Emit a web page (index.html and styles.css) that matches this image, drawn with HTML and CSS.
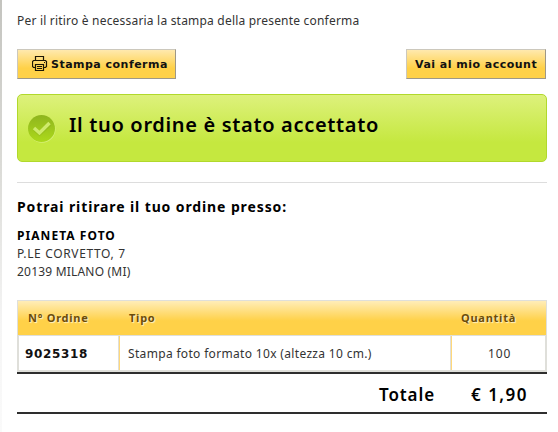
FILE: index.html
```html
<!DOCTYPE html>
<html lang="it">
<head>
<meta charset="utf-8">
<title>Conferma ordine</title>
<link rel="stylesheet" href="styles.css">
</head>
<body>
<div class="page">
  <div class="edge"></div>
  <main class="content">
    <p class="intro">Per il ritiro è necessaria la stampa della presente conferma</p>
    <div class="actions">
      <a class="btn btn-print"><svg class="printer" viewBox="0 0 16 16" width="16" height="16" fill="none" stroke="#1d1706" stroke-width="1.200"><path d="M3.500 4.500v-4h8v4M3.500 11.500h-2l-1-1v-5l1-1h12l1 1v5l-1 1h-2M3.500 8.500h8v6h-8zM5 10.500h5M5 12.500h5M12 6.500h1"/></svg><span>Stampa conferma</span></a>
      <a class="btn btn-account"><span>Vai al mio account</span></a>
    </div>
    <section class="accepted">
      <svg class="check" width="28" height="28" viewBox="0 0 28 28">
        <defs><linearGradient id="disc" x1="0" y1="0" x2="0" y2="1"><stop offset="0" stop-color="#8fb51e"/><stop offset="1" stop-color="#acd91b"/></linearGradient></defs>
        <circle cx="14" cy="14.300" r="13.500" fill="#d7f078"/>
        <circle cx="13.500" cy="13.500" r="13.500" fill="url(#disc)"/>
        <path d="M6.500 14.500l5 4.500L22 9.500" fill="none" stroke="#86ad19" stroke-width="3.500" opacity=".4"/>
        <path d="M6 13l5.500 5L21.500 8" fill="none" stroke="#cfea6c" stroke-width="3.400"/>
      </svg>
      <h1>Il tuo ordine è stato accettato</h1>
    </section>
    <section class="pickup">
      <h2>Potrai ritirare il tuo ordine presso:</h2>
      <address>
        <strong>PIANETA FOTO</strong>
        <span class="street">P.LE CORVETTO, 7</span>
        <span class="city">20139 MILANO (MI)</span>
      </address>
    </section>
    <div class="order">
      <div class="row head"><span>N° Ordine</span><span>Tipo</span><span>Quantità</span></div>
      <div class="row line"><span class="number">9025318</span><span class="type">Stampa foto formato 10x (altezza 10 cm.)</span><span class="qty">100</span></div>
    </div>
    <div class="total"><span class="label">Totale</span><span class="price">€ 1,90</span></div>
  </main>
</div>
</body>
</html>
```
FILE: styles.css
```css
* { box-sizing: border-box; }
body {
  margin: 0;
  background: #fff;
  color: #333;
  font: 12px/18px "Noto Sans", "Open Sans", sans-serif;
  white-space: nowrap;
}
.page { display: flex; width: 558px; height: 432px; overflow: hidden; }
.edge {
  width: 2px;
  background: linear-gradient(#c4c4bf, #dcdcd8 40%, #f5f5f5 75%, #fafafa);
}
.content { width: 545px; padding: 12px 0 0 15px; }
.intro { margin: 0; height: 37px; letter-spacing: .2px; }
.actions { display: flex; justify-content: space-between; padding-right: 1px; height: 30px; }
.btn {
  display: flex;
  align-items: center;
  height: 30px;
  border: 1px solid;
  border-color: #ccc8bc #9e9887 #9e9887 #ccc8bc;
  background: linear-gradient(#ffe9ae, #ffd148 65%);
  color: #111;
  font: bold 11px/18px "DejaVu Sans", sans-serif;
  letter-spacing: .48px;
}
.btn-print { width: 159px; padding-left: 14px; }
.btn-account { width: 140px; padding-left: 8px; }
.btn span { padding-top: 1px; }
.printer { margin-right: 3px; }
.accepted {
  display: flex;
  height: 68px;
  margin-top: 15px;
  padding: 20px 0 0 10px;
  border: 1px solid #b1d92c;
  border-radius: 5px;
  background: linear-gradient(#ddf17c, #c5e83f 72%);
}
h1 { margin: -5px 0 0 13px; font-size: 20px; line-height: 30px; font-weight: 600; color: #000; letter-spacing: .67px; }
.pickup { margin-top: 20px; border-top: 1px solid #ddd; height: 118px; padding-top: 14px; }
h2 { margin: 0; font-size: 14px; line-height: 20px; color: #000; letter-spacing: .89px; }
address { display: flex; flex-direction: column; align-items: flex-start; margin-top: 10px; font-style: normal; }
strong { color: #000; letter-spacing: 1.05px; }
.street { letter-spacing: .64px; }
.city { letter-spacing: .2px; }
.order { border: 1px solid #dfdfda; border-bottom-width: 2px; }
.row { display: grid; align-items: center; }
.head {
  grid-template-columns: 101px 332px 1fr;
  height: 35px;
  padding-left: 10px;
  border-bottom: 1px solid #dfdfda;
  background: linear-gradient(#ffedb8, #ffd148 58%);
  color: #6a4c0b;
  font-size: 11px;
  font-weight: bold;
  letter-spacing: .75px;
  text-shadow: 1px 1px 1px #fff3c9;
}
.line {
  grid-template-columns: 100px 332px 1fr;
  height: 34px;
  border: solid #dfdfda;
  border-width: 0 1px;
}
.line > span { height: 34px; line-height: 36px; padding-left: 8px; }
.line .number { padding-left: 6px; color: #111; font: bold 12px/37px "DejaVu Sans", sans-serif; letter-spacing: .65px; border-right: 1px solid #dfdfda; }
.line .type { letter-spacing: .33px; border-left: 1px solid #ffd87a; border-right: 1px solid #dfdfda; }
.line .qty { letter-spacing: .9px; border-left: 1px solid #ffd87a; padding-left: 36px; }
.total {
  display: flex;
  height: 42px;
  border: solid #2e2e2e;
  border-width: 2px 0;
  padding-left: 362px;
  color: #000;
  font-size: 17px;
  line-height: 41px;
  font-weight: 600;
}
.label { width: 92px; letter-spacing: .9px; }
.price { letter-spacing: 1.5px; }
```
